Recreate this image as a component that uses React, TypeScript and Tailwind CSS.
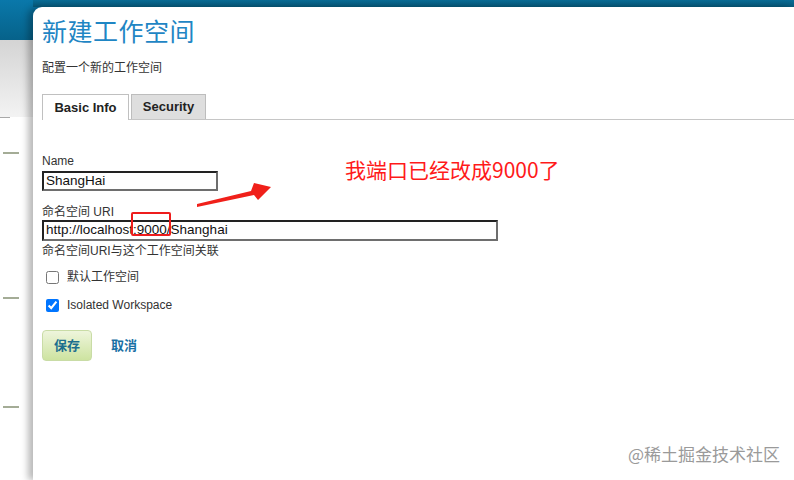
import React from "react";

const font = "font-['Liberation_Sans','Noto_Sans_CJK_SC',sans-serif]";

export default function App() {
  return (
    <div
      className={`relative w-[794px] h-[480px] overflow-hidden flex bg-[linear-gradient(to_bottom,#0a78aa_0px,#06628a_40px,#d4d4d4_40px,#f3f3f3_117px,#ffffff_117px)] ${font}`}
    >
      {/* background page strip */}
      <div className="w-[33px] shrink-0 flex flex-col">
        <div className="h-[117px]" />
        <div className="h-px w-[10px] bg-[#a8a8a8]" />
        <div className="mt-[34px] ml-[3px] h-[2px] w-[16px] bg-[#a4ac96]" />
        <div className="mt-[143px] ml-[3px] h-[2px] w-[16px] bg-[#a4ac96]" />
        <div className="mt-[107px] ml-[3px] h-[2px] w-[16px] bg-[#a4ac96]" />
      </div>

      {/* modal */}
      <div className="flex-1 flex flex-col pt-[7px] bg-[linear-gradient(to_bottom,#0a6c96_0px,#065a7c_7px,transparent_7px)]">
        <div className="flex-1 bg-white rounded-tl-[9px] shadow-[-5px_0_7px_rgba(0,0,0,0.28)] pl-[9px] pt-[10px]">
          <h1 className="text-[25px] leading-[30px] text-[#1f86c4] tracking-[0.5px]">新建工作空间</h1>
          <p className="mt-[13px] text-[12px] leading-[16px] text-[#333]">配置一个新的工作空间</p>

          <div className="mt-[18px] flex items-end gap-[2px] border-b border-[#c6c6c6] h-[26px]">
            <div className="relative -mb-px h-[26px] w-[87px] bg-white border border-b-0 border-[#c0c0c0] flex items-center justify-center text-[13px] font-bold text-[#222]">
              Basic Info
            </div>
            <div className="h-[25px] w-[75px] bg-[#dedede] border border-b-0 border-[#bdbdbd] flex items-center justify-center text-[13px] font-bold text-[#222]">
              Security
            </div>
          </div>

          <div className="mt-[34px] text-[12px] leading-[14px] text-[#333]">Name</div>
          <div className="mt-[3px] w-[176px] h-[20px] border-2 border-t-[#222] border-l-[#222] border-b-[#6e6e6e] border-r-[#6e6e6e] flex items-center px-[2px] text-[13.5px] text-[#111]">
            ShangHai
          </div>

          <div className="mt-[14px] text-[12px] leading-[14px] text-[#333]">命名空间 URI</div>
          <div className="mt-[1px] w-[456px] h-[21px] border-2 border-t-[#222] border-l-[#222] border-b-[#6e6e6e] border-r-[#6e6e6e] flex items-center px-[2px] text-[13.5px] text-[#111]">
            http://localhost:9000/Shanghai
          </div>
          <div className="mt-[3px] text-[12px] leading-[14px] text-[#333]">命名空间URI与这个工作空间关联</div>

          <label className="mt-[12px] ml-[4px] flex items-center gap-[8px] h-[14px] text-[12px] text-[#333]">
            <input type="checkbox" className="m-0 w-[13px] h-[13px]" readOnly />
            默认工作空间
          </label>
          <label className="mt-[14px] ml-[4px] flex items-center gap-[8px] h-[14px] text-[12px] text-[#333]">
            <input type="checkbox" className="m-0 w-[13px] h-[13px]" defaultChecked />
            Isolated Workspace
          </label>

          <div className="mt-[18px] flex items-center">
            <button className="w-[50px] h-[31px] rounded-[4px] border border-[#c9dca6] bg-[linear-gradient(to_bottom,#eef5dc,#cde3a0)] text-[13px] font-bold text-[#1d6f8e]">
              保存
            </button>
            <span className="ml-[19px] text-[13px] font-bold text-[#1a70a4]">取消</span>
          </div>
        </div>
      </div>

      {/* annotations */}
      <svg className="absolute left-0 top-0 pointer-events-none" width="794" height="480">
        <polygon points="197,204 251,191 254,183 271,187 258,200 254,195 197,207" fill="#f0201a" />
      </svg>
      <div className="absolute left-[131px] top-[212px] w-[40px] h-[24px] border-2 border-[#ee1c1c] rounded-[2px]" />
      <div className="absolute left-[345px] top-[155px] text-[21px] leading-[28px] text-[#ff1a1a] font-['Noto_Sans_CJK_SC','Liberation_Sans',sans-serif]">
        我端口已经改成9000了
      </div>
      <div className="absolute left-[628px] top-[443px] text-[17px] leading-[22px] text-[#9a9a9a] font-['Noto_Sans_CJK_SC',sans-serif]">
        @稀土掘金技术社区
      </div>
    </div>
  );
}
